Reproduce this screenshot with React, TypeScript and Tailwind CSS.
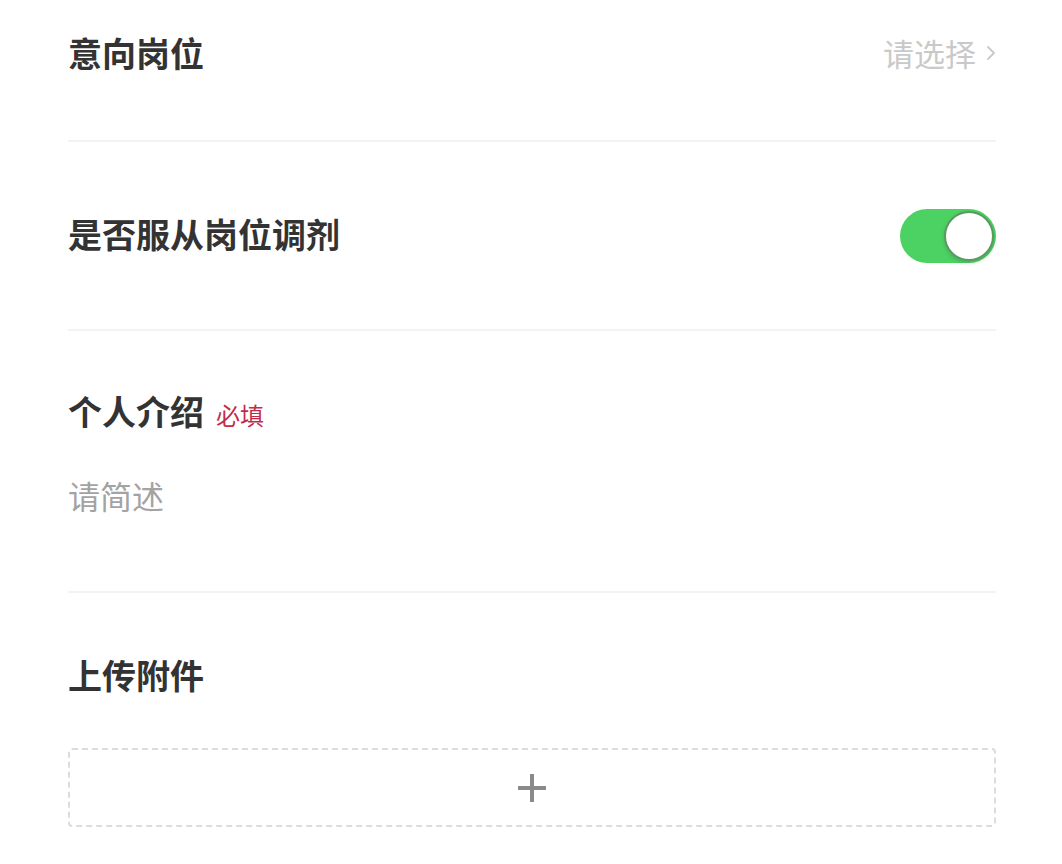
import React from "react"

function Toggle({ on }: { on: boolean }) {
  return (
    <div
      className={`relative mt-[4px] h-[54px] w-[96px] rounded-full ${on ? "bg-[#4cd263]" : "bg-[#e5e5e5]"}`}
    >
      <div className="absolute right-[2px] top-[2px] h-[50px] w-[50px] rounded-full border-2 border-[#5a9a62] bg-white shadow-[0_2px_4px_rgba(0,0,0,0.15)]" />
    </div>
  )
}

export default function App() {
  return (
    <div
      className="min-h-[864px] w-full bg-white pl-[68px] pr-[66px] text-[#333333]"
      style={{ fontFamily: '"Noto Sans CJK SC", "Noto Sans", sans-serif' }}
    >
      {/* 意向岗位 */}
      <div className="flex h-[142px] items-start justify-between border-b-2 border-[#f3f3f3] pt-[29px]">
        <span className="text-[34px] font-bold leading-[48px]">意向岗位</span>
        <span className="flex items-center gap-[10px] text-[31px] leading-[48px] text-[#c9c9c9]">
          请选择
          <svg width="10" height="16" viewBox="0 0 10 16" fill="none">
            <path d="M2 2l6 6-6 6" stroke="#c9c9c9" strokeWidth="1.8" strokeLinecap="round" strokeLinejoin="round" />
          </svg>
        </span>
      </div>

      {/* 是否服从岗位调剂 */}
      <div className="flex h-[189px] items-center justify-between border-b-2 border-[#f3f3f3] pb-[3px]">
        <span className="text-[34px] font-bold leading-[48px]">是否服从岗位调剂</span>
        <Toggle on />
      </div>

      {/* 个人介绍 */}
      <div className="border-b-2 border-[#f3f3f3] pb-[72px] pt-[56px]">
        <div className="flex items-baseline gap-[12px]">
          <span className="text-[34px] font-bold leading-[48px]">个人介绍</span>
          <span className="text-[24px] leading-[48px] text-[#c22b4c]">必填</span>
        </div>
        <div className="mt-[32px] text-[32px] leading-[48px] text-[#a3a3a3]">请简述</div>
      </div>

      {/* 上传附件 */}
      <div className="pt-[58px]">
        <div className="text-[34px] font-bold leading-[48px]">上传附件</div>
        <div className="mt-[49px] flex h-[79px] items-center justify-center rounded-[4px] border-2 border-dashed border-[#dcdcdc]">
          <svg width="32" height="32" viewBox="0 0 32 32">
            <path d="M16 2v28M2 16h28" stroke="#8a8a8a" strokeWidth="4" />
          </svg>
        </div>
      </div>
    </div>
  )
}
